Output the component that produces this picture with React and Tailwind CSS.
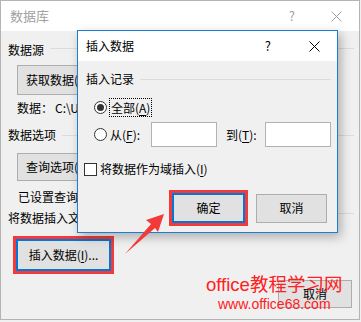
function XIcon({ color = "#000" }) {
  return (
    <svg width="11" height="11" viewBox="0 0 11 11" className="block">
      <path d="M0.5 0.5 L10.5 10.5 M10.5 0.5 L0.5 10.5" stroke={color} strokeWidth="1" fill="none" />
    </svg>
  );
}

function U({ children }) {
  return <span className="underline underline-offset-2">{children}</span>;
}

export default function App() {
  return (
    <div className="relative w-[361px] h-[322px] overflow-hidden bg-[#f0f0f0] font-['Noto_Sans_CJK_SC','Microsoft_YaHei',sans-serif] text-[12px] leading-[16px] text-black">
      {/* Outer dialog */}
      <div className="w-[360px] h-[320px] border border-[#b4b4b4] bg-[#f0f0f0] flex flex-col">
        <div className="h-[30px] shrink-0 bg-white flex items-center pl-[9px] pr-[17px] text-[#a0a0a0]">
          <span className="flex-1 text-[13px]">数据库</span>
          <span className="mr-[36px] text-[13px]">?</span>
          <XIcon color="#a0a0a0" />
        </div>
        <div className="flex-1 flex flex-col pl-[7px] pr-[5px]">
          <div className="mt-[11px] h-[16px] flex items-center">
            <span>数据源</span>
            <div className="flex-1 h-px bg-[#dcdcdc] ml-[6px] mb-[4px]" />
          </div>
          <div className="mt-[7px] ml-[9px] w-[120px] h-[30px] border border-[#adadad] bg-[#e1e1e1] flex items-center pl-[8px]">
            获取数据(<U>G</U>)...
          </div>
          <div className="mt-[5px] ml-[9px] h-[16px] flex items-center">
            <span>数据：</span>
            <span className="ml-[2px]">C:\Users\</span>
          </div>
          <div className="mt-[11px] h-[16px] flex items-center">
            <span>数据选项</span>
            <div className="flex-1 h-px bg-[#dcdcdc] ml-[6px]" />
          </div>
          <div className="mt-[10px] ml-[9px] w-[120px] h-[28px] border border-[#adadad] bg-[#e1e1e1] flex items-center pl-[8px]">
            查询选项(<U>Q</U>)...
          </div>
          <div className="mt-[8px] ml-[10px] h-[16px] flex items-center">已设置查询选项</div>
          <div className="mt-[5px] h-[16px] flex items-center">
            <span>将数据插入文档</span>
            <div className="flex-1 h-px bg-[#dcdcdc] ml-[6px] mb-[9px]" />
          </div>
          <div className="mt-[10px] ml-[5px] w-[101px] h-[38px] border-[3px] border-[#f23a3a] flex">
            <div className="flex-1 border-2 border-[#0078d7] bg-[#e1e1e1] flex items-center justify-center">
              插入数据(<U>I</U>)...
            </div>
          </div>
          <div className="mt-[6px] self-end mr-[2px] w-[74px] h-[28px] border border-[#adadad] bg-[#e1e1e1] flex items-center justify-center">
            取消
          </div>
        </div>
      </div>

      {/* Inner dialog */}
      <div className="absolute left-[77px] top-[30px] w-[261px] h-[203px] border border-[#1a7fd4] bg-[#f0f0f0] shadow-[3px_4px_10px_rgba(0,0,0,0.28)] flex flex-col">
        <div className="h-[30px] shrink-0 bg-white flex items-center pl-[8px] pr-[17px]">
          <span className="flex-1">插入数据</span>
          <span className="mr-[38px] text-[13px]">?</span>
          <XIcon />
        </div>
        <div className="flex-1 flex flex-col">
          <div className="mt-[10px] pl-[8px] pr-[6px] h-[16px] flex items-center">
            <span>插入记录</span>
            <div className="flex-1 h-px bg-[#dcdcdc] ml-[6px]" />
          </div>
          <div className="mt-[11px] ml-[16px] h-[19px] flex items-center">
            <div className="w-[13px] h-[13px] rounded-full border border-[#333] bg-white flex items-center justify-center">
              <div className="w-[7px] h-[7px] rounded-full bg-[#333]" />
            </div>
            <div className="ml-[2px] h-[19px] border border-dotted border-black px-[1px] flex items-center">
              全部(<U>A</U>)
            </div>
          </div>
          <div className="mt-[5px] ml-[16px] h-[25px] flex items-center">
            <div className="w-[13px] h-[13px] rounded-full border border-[#333] bg-white" />
            <span className="ml-[3px] w-[41px]">从(<U>F</U>):</span>
            <div className="w-[66px] h-[25px] border border-[#b2b2b2] bg-white" />
            <span className="ml-[9px] w-[39px]">到(<U>T</U>):</span>
            <div className="w-[66px] h-[25px] border border-[#b2b2b2] bg-white" />
          </div>
          <div className="mt-[14px] ml-[6px] h-[16px] flex items-center">
            <div className="w-[13px] h-[13px] border border-[#333] bg-white" />
            <span className="ml-[3px]">将数据作为域插入(<U>I</U>)</span>
          </div>
          <div className="mt-[13px] ml-[91px] flex items-center">
            <div className="w-[79px] h-[36px] border-[3px] border-[#f23a3a] flex">
              <div className="flex-1 border-2 border-[#0078d7] bg-[#e1e1e1] flex items-center justify-center">
                确定
              </div>
            </div>
            <div className="ml-[8px] w-[71px] h-[29px] border border-[#adadad] bg-[#e1e1e1] flex items-center justify-center">
              取消
            </div>
          </div>
        </div>
      </div>

      {/* Arrow annotation */}
      <svg className="absolute left-0 top-0" width="361" height="322" viewBox="0 0 361 322">
        <polygon points="164,214 146,220 151,224 125,254 155,228 158,232" fill="#f23a3a" />
      </svg>

      {/* Watermark */}
      <div className="absolute left-[206px] top-[274px] text-[#ff2020] font-['Liberation_Sans','Noto_Sans_CJK_SC',sans-serif] text-[18.5px] leading-[22px] whitespace-nowrap">
        office教程学习网
      </div>
      <div className="absolute left-[218px] top-[296px] text-[#ff2020] font-['Liberation_Sans',sans-serif] text-[14px] leading-[16px] whitespace-nowrap">
        www.office68.com
      </div>
    </div>
  );
}
